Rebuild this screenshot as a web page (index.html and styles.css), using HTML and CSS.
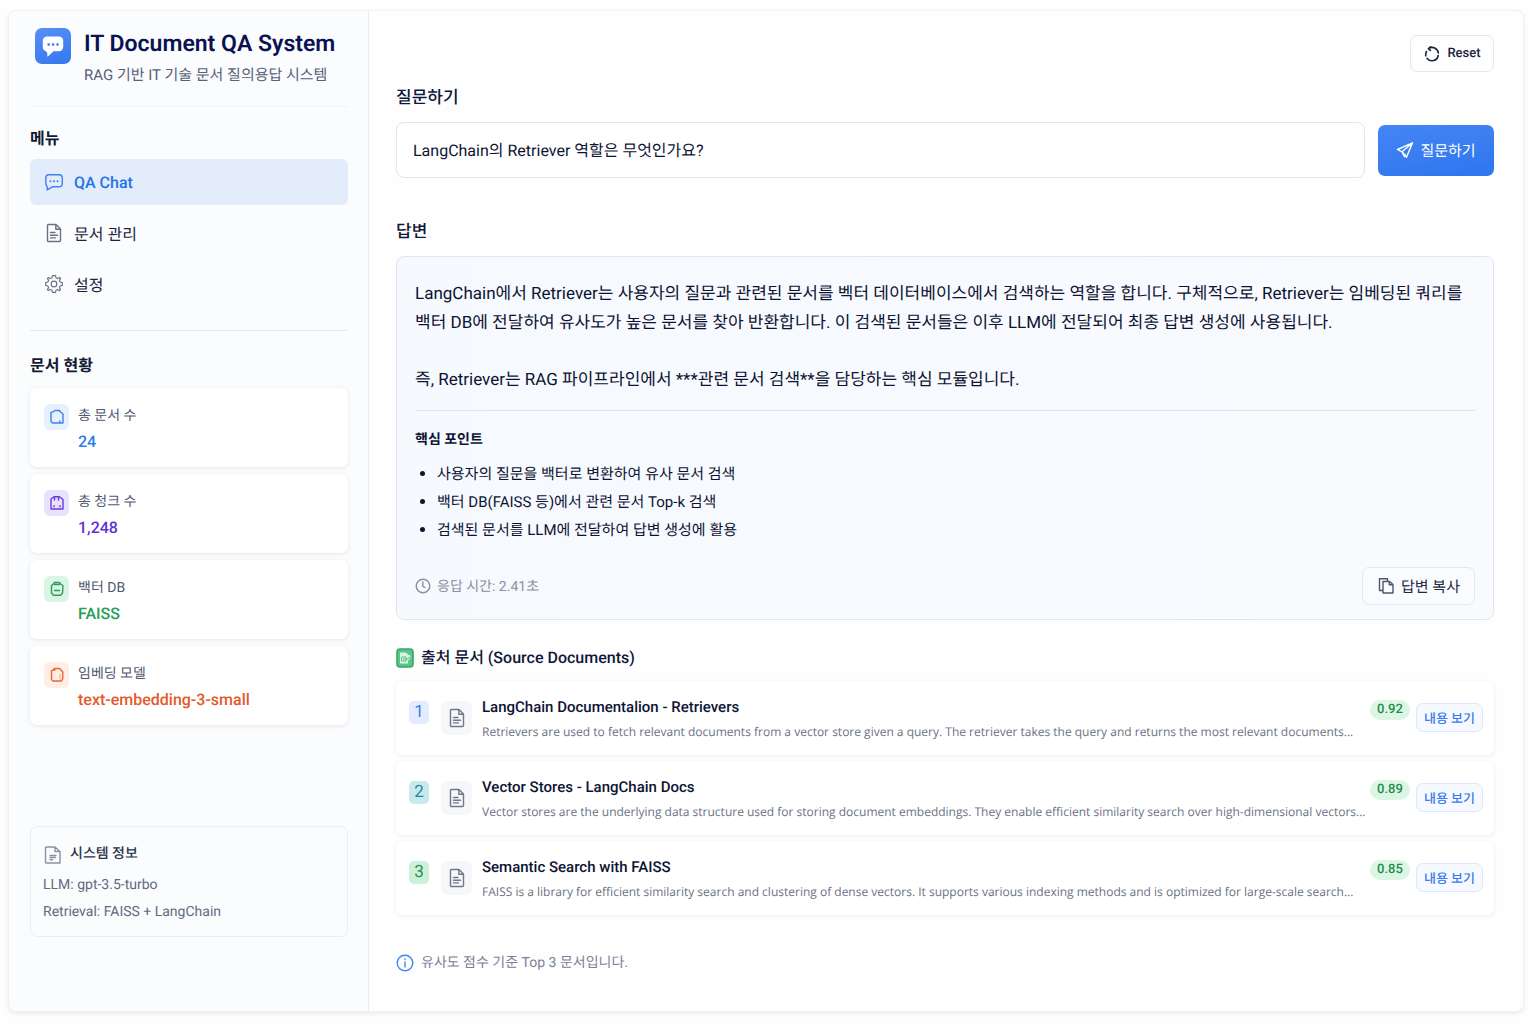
FILE: index.html
```html
<!DOCTYPE html>
<html lang="ko">
<head>
<meta charset="utf-8">
<meta name="viewport" content="width=device-width, initial-scale=1">
<title>IT Document QA System</title>
<link rel="stylesheet" href="styles.css">
</head>
<body>
<svg class="sprite" aria-hidden="true">
  <symbol id="doc" viewBox="0 0 20 20"><path d="M4.500 1.500H12L16.500 6V17.500a1 1 0 0 1-1 1H4.500a1 1 0 0 1-1-1V2.500a1 1 0 0 1 1-1ZM11.800 1.800V6.200H16.200M6.500 9.500H11M6.500 12.200H13.500M6.500 14.900H11.500"/></symbol>
</svg>
<div class="app">
  <aside class="sidebar">
    <header class="brand">
      <span class="logo">
        <svg width="22" height="22" viewBox="0 0 22 22" aria-hidden="true"><path fill="#fff" d="M5 1.500H17a4.200 4.200 0 0 1 4.200 4.200V12a4.200 4.200 0 0 1-4.200 4.200H11.500L6.200 21.300a.5.500 0 0 1-.9-.4V18L3.600 16A4.200 4.200 0 0 1 .8 12V5.700A4.200 4.200 0 0 1 5 1.500Z"/><g fill="#3b7cf3"><rect x="5.500" y="8.300" width="2.400" height="2.400" rx=".6"/><rect x="9.900" y="8.300" width="2.400" height="2.400" rx=".6"/><rect x="14.300" y="8.300" width="2.400" height="2.400" rx=".6"/></g></svg>
      </span>
      <div>
        <h1 class="brand-title">IT Document QA System</h1>
        <p class="brand-sub">RAG 기반 IT 기술 문서 질의용답 시스템</p>
      </div>
    </header>

    <nav class="menu" aria-labelledby="menu-label">
      <h2 class="side-label" id="menu-label">메뉴</h2>
      <a class="menu-item active" href="#chat" aria-current="page">
        <svg class="icon" width="20" height="20" viewBox="0 0 20 20" aria-hidden="true"><path d="M5 2.800H15a3.300 3.300 0 0 1 3.300 3.300V11.500A3.300 3.300 0 0 1 15 14.800H8.500L3.200 17.800V14.800L2.500 13.500A3.300 3.300 0 0 1 1.800 11.500V6.100A3.300 3.300 0 0 1 5 2.800Z"/><path stroke-width="2" d="M6.500 9.200V9.210M10 9.200V9.210M13.500 9.200V9.210"/></svg>
        QA Chat
      </a>
      <a class="menu-item" href="#documents">
        <svg class="icon" width="20" height="20" aria-hidden="true"><use href="#doc"/></svg>
        문서 관리
      </a>
      <a class="menu-item" href="#settings">
        <svg class="icon" width="20" height="20" viewBox="0 0 24 24" aria-hidden="true"><circle cx="12" cy="12" r="3.400"/><path d="M10.200 2H13.800L14.500 4.700L16.500 5.500L18.800 4.100L19.900 5.200L18.500 7.600L19.300 9.600L22 10.300V13.700L19.300 14.400L18.500 16.400L19.900 18.800L18.700 20L16.400 18.500L14.500 19.300L13.800 22H10.200L9.500 19.300L7.500 18.500L5.200 19.900L4.100 18.700L5.500 16.400L4.700 14.400L2 13.700V10.300L4.700 9.600L5.500 7.600L4.100 5.200L5.300 4.100L7.600 5.500L9.500 4.700Z"/></svg>
        설정
      </a>
    </nav>

    <section class="stats" aria-labelledby="stats-label">
      <h2 class="side-label" id="stats-label">문서 현황</h2>
      <div class="stat blue">
        <span class="stat-icon"><svg class="icon" width="16" height="16" viewBox="0 0 16 16" aria-hidden="true"><path d="M4.200 2.800L6 1.500H10.500L11.500 3L14 5V14H10.800V12M10.800 14H3.500L2 12.500V3.500L4.200 2.800"/></svg></span>
        <div><p class="stat-name">총 문서 수</p><p class="stat-value">24</p></div>
      </div>
      <div class="stat purple">
        <span class="stat-icon"><svg class="icon" width="16" height="16" viewBox="0 0 16 16" aria-hidden="true"><path d="M2 4L5 1.700H10.500L14 4.500V14H2ZM5.500 2V5M9.500 2V5M5 11.800V10.800M11 10.800V11.800"/></svg></span>
        <div><p class="stat-name">총 청크 수</p><p class="stat-value">1,248</p></div>
      </div>
      <div class="stat green">
        <span class="stat-icon"><svg class="icon" width="16" height="16" viewBox="0 0 16 16" aria-hidden="true"><path d="M4.500 3L5.500 1.500H10.500L11.500 3L14 4.500L13.500 12L11.500 14.300H4.500L2.500 12V4.500L4.500 3ZM5.500 9.500H10.500M5.500 3.500H10.500"/></svg></span>
        <div><p class="stat-name">백터 DB</p><p class="stat-value">FAISS</p></div>
      </div>
      <div class="stat orange">
        <span class="stat-icon"><svg class="icon" width="16" height="16" viewBox="0 0 16 16" aria-hidden="true"><path d="M4.200 3L5.500 1.500H10.500L13.800 5V11.500L12.500 14H4L2.500 12.500V3.800L4.200 3H6"/><path opacity=".4" d="M11 8V12"/></svg></span>
        <div><p class="stat-name">임베딩 모델</p><p class="stat-value">text-embedding-3-small</p></div>
      </div>
    </section>

    <section class="system">
      <h2 class="system-title"><svg class="icon" width="20" height="20" viewBox="0 0 20 20" aria-hidden="true"><path d="M3.500 2H12L17 6.500V18H3.500a1 1 0 0 1-1-1V3a1 1 0 0 1 1-1ZM12 2.300V6.500H16.800M7 10.500H13M7 12.500H12.500M7 14.700H9.500"/></svg>시스템 정보</h2>
      <p>LLM: gpt-3.5-turbo</p>
      <p>Retrieval: FAISS + LangChain</p>
    </section>
  </aside>

  <main class="main">
    <div class="toolbar">
      <button class="btn reset" type="button">
        <svg class="icon" width="18" height="18" viewBox="0 0 18 18" aria-hidden="true"><path d="M5.600 3.500A6.300 6.300 0 0 1 15.300 8M15.200 10.500A6.300 6.300 0 0 1 4 13.300M2.700 10.800A6.300 6.300 0 0 1 3.500 6.500M7.600 1.800L5.400 3.600L7.300 5.400"/></svg>
        Reset
      </button>
    </div>

    <form class="ask">
      <label class="heading" for="question">질문하기</label>
      <div class="ask-row">
        <input class="ask-input" id="question" type="text" value="LangChain의 Retriever 역할은 무엇인가요?">
        <button class="ask-btn" type="submit">
          <svg class="icon" width="18" height="18" viewBox="0 0 18 18" aria-hidden="true"><path d="M16.500 1.800L1.500 8.500L6 10.800L10.500 16.300L16.500 1.800L6 10.800L8.300 15.500L9 13.500"/></svg>
          질문하기
        </button>
      </div>
    </form>

    <h2 class="heading">답변</h2>
    <section class="answer">
      <p class="answer-text">LangChain에서 Retriever는 사용자의 질문과 관련된 문서를 벡터 데이터베이스에서 검색하는 역할을 합니다. 구체적으로, Retriever는 임베딩된 쿼리를 백터 DB에 전달하여 유사도가 높은 문서를 찾아 반환합니다. 이 검색된 문서들은 이후 LLM에 전달되어 최종 답변 생성에 사용됩니다.</p>
      <p class="answer-text">즉, Retriever는 RAG 파이프라인에서 ***관련 문서 검색**을 담당하는 핵심 모듈입니다.</p>
      <div class="points">
        <h3 class="points-title">핵심 포인트</h3>
        <ul>
          <li>사용자의 질문을 백터로 변환하여 유사 문서 검색</li>
          <li>백터 DB(FAISS 등)에서 관련 문서 Top-k 검색</li>
          <li>검색된 문서를 LLM에 전달하여 답변 생성에 활용</li>
        </ul>
      </div>
      <footer class="answer-foot">
        <span class="elapsed"><svg class="icon" width="16" height="16" viewBox="0 0 16 16" aria-hidden="true"><circle cx="8" cy="8" r="6.800"/><path d="M7.800 4V8.300L10 9.500"/></svg>응답 시간: 2.41초</span>
        <button class="btn copy" type="button">
          <svg class="icon" width="18" height="18" viewBox="0 0 18 18" aria-hidden="true"><path d="M6 4.500H12.500L16 7.500V16H6ZM12.300 4.500V7.800H16M6 13.500H2.500V1.800H10.500V4.300"/></svg>
          답변 복사
        </button>
      </footer>
    </section>

    <h2 class="heading source-heading">
      <svg width="18" height="20" viewBox="0 0 18 20" aria-hidden="true"><rect x="1" y="1" width="16" height="18" rx="3" fill="#5cc489" stroke="#37a967" stroke-width="1.600"/><path fill="#d8f5e3" d="M4 4.500H9.500L12 6.500L15 8L13.500 11.500L12 12.500V15.500H4Z"/><path fill="none" stroke="#58bd84" stroke-width="1" d="M5.500 9H10V13H5.500ZM7 11H12L14 8.500"/></svg>
      출처 문서 (Source Documents)
    </h2>
    <ol class="sources">
      <li class="source">
        <span class="rank rank-1">1</span>
        <span class="file"><svg class="icon" width="20" height="20" aria-hidden="true"><use href="#doc"/></svg></span>
        <div class="source-body"><h3>LangChain Documentalion - Retrievers</h3><p>Retrievers are used to fetch relevant documents from a vector store given a query. The retriever takes the query and returns the most relevant documents...</p></div>
        <span class="score">0.92</span>
        <button class="view" type="button">내용 보기</button>
      </li>
      <li class="source">
        <span class="rank rank-2">2</span>
        <span class="file"><svg class="icon" width="20" height="20" aria-hidden="true"><use href="#doc"/></svg></span>
        <div class="source-body"><h3>Vector Stores - LangChain Docs</h3><p>Vector stores are the underlying data structure used for storing document embeddings. They enable efficient similarity search over high-dimensional vectors...</p></div>
        <span class="score">0.89</span>
        <button class="view" type="button">내용 보기</button>
      </li>
      <li class="source">
        <span class="rank rank-3">3</span>
        <span class="file"><svg class="icon" width="20" height="20" aria-hidden="true"><use href="#doc"/></svg></span>
        <div class="source-body"><h3>Semantic Search with FAISS</h3><p>FAISS is a library for efficient similarity search and clustering of dense vectors. It supports various indexing methods and is optimized for large-scale search...</p></div>
        <span class="score">0.85</span>
        <button class="view" type="button">내용 보기</button>
      </li>
    </ol>

    <p class="note"><svg class="icon" width="18" height="18" viewBox="0 0 18 18" aria-hidden="true"><circle cx="9" cy="9" r="7.800"/><path d="M9 8V13M9 5V5.600"/></svg>유사도 점수 기준 Top 3 문서입니다.</p>
  </main>
</div>
</body>
</html>
```
FILE: styles.css
```css
* { box-sizing: border-box; margin: 0; padding: 0; }

body {
  font-family: Roboto, "Noto Sans CJK KR", sans-serif;
  text-rendering: geometricPrecision;
  color: #0d1433;
  background: #fefefe;
  word-break: keep-all;
  padding: 10px 12px 12px 8px;
}
button, input { font: inherit; color: inherit; text-rendering: inherit; }
button { cursor: pointer; }
h1, h2, h3 { font-weight: 500; }
ul, ol { list-style: none; }
a { text-decoration: none; }

.sprite { display: none; }
.icon {
  flex: none;
  fill: none;
  stroke: currentColor;
  stroke-width: 1.4;
  stroke-linecap: round;
  stroke-linejoin: round;
}

.app {
  display: grid;
  grid-template-columns: 360px minmax(0, 1fr);
  min-height: calc(100vh - 22px);
  border: 1px solid #f0f2f5;
  border-radius: 8px;
  background: #fefefe;
  box-shadow: 0 2px 4px rgba(30, 40, 60, .09);
}

/* Sidebar */
.sidebar {
  display: flex;
  flex-direction: column;
  padding: 17px 20px 74px 21px;
  border-right: 1px solid #e9ecf1;
  border-radius: 8px 0 0 8px;
  background: #fbfcfe;
}
.brand {
  display: flex;
  gap: 13px;
  padding: 0 0 17px 5px;
  border-bottom: 1px solid #f0f2f6;
}
.logo {
  display: grid;
  place-items: center;
  flex: none;
  width: 36px;
  height: 36px;
  border-radius: 7px;
  background: linear-gradient(160deg, #5590f5, #3577f0);
}
.brand-title { font-size: 23px; line-height: 32px; font-weight: 600; color: #0a1250; white-space: nowrap; }
.brand-sub { margin-top: 2px; font-size: 15px; line-height: 27px; color: #596078; }

.side-label { font-size: 16px; line-height: 24px; font-weight: 700; color: #131a33; }
.menu { padding: 20px 0 23px; border-bottom: 1px solid #e5e8ee; }
.menu .side-label { margin-bottom: 8px; }
.menu-item {
  display: flex;
  align-items: center;
  gap: 10px;
  height: 46px;
  margin-bottom: 5px;
  padding: 0 14px;
  border-radius: 6px;
  font-size: 16px;
  color: #1c2340;
}
.menu-item:last-child { margin-bottom: 0; }
.menu-item .icon { color: #6a7186; }
.menu-item.active { background: #e3ecfa; color: #1f74ea; font-weight: 500; }
.menu-item.active .icon { color: #3c82f0; }

.stats { display: grid; gap: 7px; padding-top: 23px; }
.stats .side-label { margin-bottom: 3px; }
.stat {
  display: flex;
  gap: 9px;
  min-height: 79px;
  padding: 15px 14px 12px;
  border-radius: 7px;
  background: #fff;
  box-shadow: 0 1px 4px rgba(30, 40, 70, .1);
}
.stat-icon {
  display: grid;
  place-items: center;
  flex: none;
  width: 25px;
  height: 26px;
  margin-top: 1px;
  border-radius: 6px;
}
.stat-name { font-size: 14px; line-height: 26px; color: #515971; }
.stat-value { font-size: 16px; line-height: 26px; font-weight: 500; }
.blue .stat-icon { background: #e6f0fe; color: #3c82f0; }
.blue .stat-value { color: #2f7de8; }
.purple .stat-icon { background: #e9e2fd; color: #6a3be0; }
.purple .stat-value { color: #6431d6; }
.green .stat-icon { background: #d9f5e4; color: #2c9c5c; }
.green .stat-value { color: #25a056; }
.orange .stat-icon { background: #feeee5; color: #ec6436; }
.orange .stat-value { color: #e35a2b; }

.system {
  margin-top: auto;
  padding: 13px 12px 10px;
  border: 1px solid #ebeef3;
  border-radius: 7px;
  font-size: 14px;
  line-height: 27px;
  color: #636a80;
}
.system-title {
  display: flex;
  align-items: center;
  gap: 7px;
  margin-bottom: 3px;
  line-height: 29px;
  font-size: 14px;
  color: #2a3148;
}
.system-title .icon { color: #8b91a1; }

/* Main column */
.main { padding: 24px 29px 29px 27px; }
.toolbar { display: flex; justify-content: flex-end; }
.btn {
  display: flex;
  align-items: center;
  justify-content: center;
  gap: 6px;
  border: 1px solid #e3e7ee;
  border-radius: 7px;
  background: transparent;
}
.reset { width: 84px; height: 37px; font-size: 13px; font-weight: 500; color: #1b2140; }
.reset .icon { stroke-width: 1.6; }

.heading {
  display: flex;
  align-items: center;
  gap: 7px;
  font-size: 17px;
  line-height: 28px;
  font-weight: 500;
  color: #10173a;
}
.ask { padding: 12px 0 40px; }
.ask-row {
  display: flex;
  align-items: center;
  gap: 13px;
  margin-top: 10px;
}
.ask-input {
  flex: 1;
  min-width: 0;
  height: 56px;
  padding: 0 16px 2px;
  border: 1px solid #e2e5eb;
  border-radius: 8px;
  background: #fff;
  font-size: 16px;
}
.ask-btn {
  display: flex;
  align-items: center;
  justify-content: center;
  gap: 6px;
  width: 116px;
  height: 51px;
  border: 0;
  border-radius: 7px;
  background: linear-gradient(170deg, #4585f5, #2e76ee);
  color: #fff;
  font-size: 15px;
}

.answer {
  margin-top: 10px;
  padding: 23px 18px 14px;
  border: 1px solid #e0e6f1;
  border-radius: 8px;
  background: linear-gradient(90deg, #f6f9fe, #f8fafe);
}
.answer-text { font-size: 17px; line-height: 29px; margin-bottom: 28px; }
.points { margin-top: -13px; padding-top: 14px; border-top: 1px solid #e0e4ec; font-size: 15px; line-height: 28px; }
.points-title { font-size: 14px; line-height: 30px; font-weight: 700; padding-bottom: 5px; }
.points ul { padding-left: 22px; list-style: disc; }
.points li::marker { font-size: 16px; }
.answer-foot {
  display: flex;
  align-items: center;
  justify-content: space-between;
  margin-top: 23px;
}
.elapsed { display: flex; align-items: center; gap: 6px; font-size: 14px; color: #8a90a0; }
.copy { width: 113px; height: 38px; font-size: 15px; background: #f9fbfe; color: #232a44; }
.copy .icon { color: #4f566c; }

.source-heading { margin-top: 24px; font-size: 16px; }
.sources {
  display: grid;
  grid-template-columns: minmax(0, 1fr);
  gap: 6px;
  margin-top: 9px;
}
.source {
  display: flex;
  align-items: flex-start;
  min-height: 74px;
  padding: 12px 11px 12px 13px;
  border-radius: 7px;
  background: #fff;
  box-shadow: 0 1px 4px rgba(30, 40, 70, .08);
}
.rank {
  flex: none;
  width: 20px;
  margin-top: 8px;
  border-radius: 5px;
  font-size: 17px;
  line-height: 23px;
  text-align: center;
}
.rank-1 { background: #e2ecfe; color: #3c7ff0; }
.rank-2 { background: #c8e9ee; color: #2689a0; }
.rank-3 { background: #cdf0da; color: #23914f; }
.file {
  display: grid;
  place-items: center;
  flex: none;
  width: 31px;
  height: 34px;
  margin: 8px 10px 0 12px;
  border-radius: 7px;
  background: #f6f7fa;
  color: #727888;
}
.source-body { flex: 1; min-width: 0; }
.source-body h3 { font-size: 15px; line-height: 28px; }
.source-body p {
  overflow: hidden;
  font-family: "Open Sans", "Noto Sans CJK KR", sans-serif;
  font-size: 12px;
  line-height: 22px;
  color: #6b7283;
  text-overflow: ellipsis;
  white-space: nowrap;
}
.score {
  flex: none;
  width: 40px;
  margin: 7px 6px 0 0;
  border-radius: 10px;
  background: #dcf6e4;
  color: #1d8b4b;
  font-size: 13px;
  font-weight: 500;
  line-height: 20px;
  text-align: center;
}
.view {
  flex: none;
  width: 67px;
  height: 29px;
  margin-top: 10px;
  border: 1px solid #dde8fb;
  border-radius: 7px;
  background: #f6f9ff;
  color: #3a7cec;
  font-size: 13px;
  font-weight: 500;
}
.note {
  display: flex;
  align-items: center;
  gap: 7px;
  margin-top: 35px;
  font-size: 14px;
  line-height: 26px;
  color: #7b8195;
}
.note .icon { color: #3f86f2; }
```
